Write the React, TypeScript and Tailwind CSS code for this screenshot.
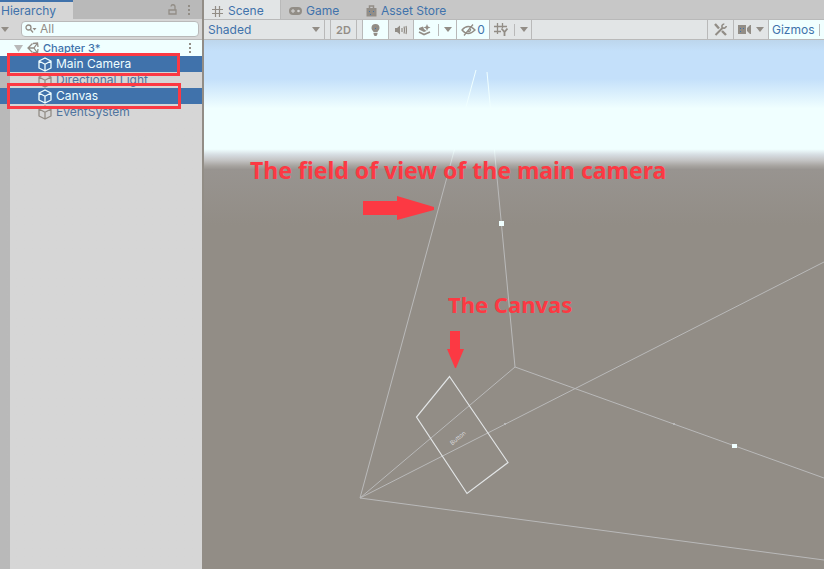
import type { ReactNode } from "react";

const caret = "M0 0h8L4 5z";

function Caret({ className = "" }: { className?: string }) {
  return (
    <svg className={"h-[5px] w-2 shrink-0 fill-[#928d86] " + className} viewBox="0 0 8 5" aria-hidden="true">
      <path d={caret} />
    </svg>
  );
}

function Dots() {
  return (
    <svg className="h-3 w-1 shrink-0 fill-[#928d86]" viewBox="0 0 4 12" aria-hidden="true">
      <path d="M1 1h2v2H1zM1 5h2v2H1zM1 9h2v2H1z" />
    </svg>
  );
}

function Cube() {
  return (
    <svg className="h-[15px] w-[14px] shrink-0" viewBox="0 0 14 15" fill="none" stroke="currentColor" strokeWidth="1.3" strokeLinejoin="round" aria-hidden="true">
      <path d="M7 1l6 3v7l-6 3-6-3V4zM1 4l6 3.3L13 4M7 7.300V14" />
    </svg>
  );
}

function TreeRow({ label, selected, mark }: { label: string; selected?: boolean; mark?: string }) {
  return (
    <li className="relative h-4">
      <button
        type="button"
        className={
          "flex h-4 w-full items-center gap-1 pl-[38px] text-left text-[12px] leading-4 " +
          (selected ? "bg-[#4072ab] text-[#f0ffff]" : "text-[#928d86]")
        }
      >
        <Cube />
        <span className={selected ? "" : "text-[#4f749e]"}>{label}</span>
      </button>
      {mark && <span className={"pointer-events-none absolute z-10 border-[3px] border-[#fc3943] " + mark} />}
    </li>
  );
}

function Hierarchy() {
  return (
    <aside className="flex w-[204px] shrink-0 flex-col border-r-2 border-[#928d86] bg-[#d6d6d6]">
      <header className="flex h-[19px] items-center bg-[#b9b9b9]">
        <h2 className="flex h-full w-[73px] items-center border-t-2 border-[#4072ab] bg-[#d6d6d6] pl-px text-[12px] text-[#4072ab]">
          Hierarchy
        </h2>
        <div className="ml-auto flex items-center gap-[10px] pr-[11px]">
          <button type="button" aria-label="Lock">
            <svg className="block h-3 w-[9px]" viewBox="0 0 9 12" fill="none" stroke="#928d86" strokeWidth="1.3" aria-hidden="true">
              <path d="M1 6h7v4H1zM7 6V3a2 2 0 0 0-4-.5" />
            </svg>
          </button>
          <button type="button" aria-label="Menu"><Dots /></button>
        </div>
      </header>
      <div className="flex h-[21px] items-center gap-3 border-b border-[#b9b9b9] pl-px pr-[3px]">
        <button type="button" aria-label="Create"><Caret /></button>
        <label className="flex h-4 min-w-0 flex-1 items-center gap-[3px] rounded border border-[#b9b9b9] bg-[#f0ffff] pl-[3px]">
          <svg className="h-[10px] w-3 shrink-0" viewBox="0 0 12 10" fill="none" stroke="#928d86" strokeWidth="1.3" aria-hidden="true">
            <circle cx="3.500" cy="3.500" r="2.500" />
            <path d="M5.500 5.500L8 8.500" />
            <path d="M7.500 4h4l-2 2.500z" fill="#928d86" stroke="none" />
          </svg>
          <input aria-label="Search" placeholder="All" className="w-full min-w-0 bg-transparent text-[12px] leading-4 outline-none placeholder:text-[#928d86]" />
        </label>
      </div>
      <div className="flex flex-1 flex-col">
        <div className="flex h-4 items-center bg-[#f0ffff] pl-[14px] pr-[10px] leading-4 text-[#4072ab]">
          <svg className="h-[7px] w-[9px] fill-[#b9b9b9]" viewBox="0 0 9 7" aria-hidden="true"><path d="M0 0h9L4.500 7z" /></svg>
          <svg className="ml-1 h-3 w-3" viewBox="0 0 12 12" fill="none" stroke="#928d86" strokeWidth="1.300" aria-hidden="true">
            <path d="M5.500 1.500L1 6l4.500 4.500M1 6h6M10.500 1L7 6l3.500 5M6 1.500l4.500-.5.500 4M6 10.500l4.500.5.500-4" />
          </svg>
          <span className="ml-1 text-[11px] font-medium">Chapter 3*</span>
          <button type="button" aria-label="Scene menu" className="ml-auto"><Dots /></button>
        </div>
        <ul className="flex-1 bg-linear-to-r from-[#b9b9b9] from-[10px] to-[#d6d6d6] to-[10px]">
          <TreeRow label="Main Camera" selected mark="-top-[3px] left-[7px] h-[23px] w-[173px]" />
          <TreeRow label="Directional Light" />
          <TreeRow label="Canvas" selected mark="-top-[5px] left-[7px] h-[26px] w-[174px]" />
          <TreeRow label="EventSystem" />
        </ul>
      </div>
    </aside>
  );
}

function Tool({ label, className, children }: { label: string; className: string; children: ReactNode }) {
  return (
    <button type="button" aria-label={label} className={"flex h-full shrink-0 items-center justify-center border-r border-[#b9b9b9] " + className}>
      {children}
    </button>
  );
}

function Tabs() {
  return (
    <nav className="flex h-[19px] shrink-0 bg-[#c7c7c7] text-[12px] leading-4 text-[#4072ab]">
      <button type="button" className="flex w-[77px] items-center gap-[5px] border-r border-[#b9b9b9] bg-[#e2e5e6] pl-2 pt-[3px]">
        <svg className="h-[11px] w-[11px]" viewBox="0 0 11 11" stroke="#928d86" strokeWidth="1.200" aria-hidden="true">
          <path d="M3.500 0v11M7.500 0v11M0 3.500h11M0 7.500h11" />
        </svg>
        Scene
      </button>
      <button type="button" className="flex w-[77px] items-center gap-1 pl-2 pt-[3px]">
        <svg className="h-2 w-[13px]" viewBox="0 0 13 8" aria-hidden="true">
          <rect width="13" height="8" rx="4" fill="#928d86" />
          <path d="M2 4h4M4 2v4" stroke="#d6d6d6" />
          <circle cx="9.500" cy="4" r="1.300" fill="#d6d6d6" />
        </svg>
        Game
      </button>
      <button type="button" className="flex items-center gap-1 pl-2 pt-[3px]">
        <svg className="h-3 w-[11px]" viewBox="0 0 11 12" aria-hidden="true">
          <path d="M3.500 4V1h4v3" fill="none" stroke="#928d86" strokeWidth="1.500" />
          <path d="M.5 3h10v8.500H.5z" fill="#928d86" />
          <path d="M3 6h1v1H3zM7 6h1v1H7zM4 9h1v1H4z" fill="#4072ab" />
        </svg>
        Asset Store
      </button>
    </nav>
  );
}

function Toolbar() {
  return (
    <div className="flex h-[21px] shrink-0 border-y border-[#b9b9b9] bg-[#e2e5e6] text-[12px] leading-4 text-[#4072ab]">
      <div className="relative mr-[5px] flex w-[121px] shrink-0 items-center border-r border-[#b9b9b9]">
        <select aria-label="Draw mode" className="w-full appearance-none bg-transparent pl-1 outline-none">
          <option>Shaded</option>
        </select>
        <Caret className="pointer-events-none absolute right-1" />
      </div>
      <Tool label="2D" className="mr-[5px] w-[27px] border-l text-[11px] font-semibold text-[#928d86]">2D</Tool>
      <Tool label="Lighting" className="w-[27px] border-l bg-[#f0ffff]">
        <svg className="h-3 w-[9px] fill-[#928d86]" viewBox="0 0 9 12" aria-hidden="true">
          <path d="M4.500 0a4 4 0 0 1 4 4c0 2-1.500 2.500-2 4H2.500C2 6.500.5 6 .5 4a4 4 0 0 1 4-4zM2.500 8.700h4V10L5.500 12h-2l-1-2z" />
          <path d="M4 4h1v1H4z" fill="#4072ab" />
        </svg>
      </Tool>
      <Tool label="Audio" className="w-[25px]">
        <svg className="h-[10px] w-3" viewBox="0 0 12 10" fill="none" stroke="#928d86" strokeWidth="1.200" aria-hidden="true">
          <path d="M0 3h2l3-2.500v9L2 7H0z" fill="#928d86" stroke="none" />
          <path d="M7 3v4M9 1.500q1 3.500 0 7M11 1q1 4 0 8" />
        </svg>
      </Tool>
      <Tool label="Effects" className="w-[43px] bg-[#f0ffff]">
        <svg className="h-3 w-[13px]" viewBox="0 0 13 12" aria-hidden="true">
          <path d="M9 0l1 2.500 2.500 1-2.500 1L9 7 8 4.500 5.500 3.500 8 2.500zM1 4l4-1.500L6 5l2.500 2L6 8 1 5.500z" fill="#928d86" />
          <path d="M1 8l5 2.500L12 8" fill="none" stroke="#928d86" strokeWidth="1.600" />
        </svg>
        <span className="ml-[7px] mr-[5px] h-3 border-l border-[#b9b9b9]" />
        <Caret />
      </Tool>
      <Tool label="Hidden objects: 0" className="w-[33px] gap-px bg-[#f0ffff]">
        <svg className="h-3 w-[15px]" viewBox="0 0 15 12" fill="none" stroke="#928d86" strokeWidth="1.300" aria-hidden="true">
          <path d="M1 6q6-7 13 0-7 7-13 0zM3 11.500L12 .5M7 7.500A2 2 0 0 0 9.500 5" />
        </svg>
        <span>0</span>
      </Tool>
      <Tool label="Grid" className="w-[42px]">
        <svg className="h-[13px] w-[14px]" viewBox="0 0 14 13" fill="none" stroke="#928d86" strokeWidth="1.300" aria-hidden="true">
          <path d="M3.500 0v11M8.500 0v5M0 3.500h13M0 8.500h7" />
          <path d="M7.500 5.500L10.500 9l3-3.500M10.500 9v4" strokeWidth="1.800" />
        </svg>
        <span className="ml-1.5 mr-[5px] h-3 border-l border-[#b9b9b9]" />
        <Caret />
      </Tool>
      <div className="ml-auto flex h-full">
        <Tool label="Component tools" className="w-[27px] border-l">
          <svg className="h-[13px] w-[13px]" viewBox="0 0 13 13" fill="none" stroke="#928d86" aria-hidden="true">
            <path d="M1 1l4 4.500M8 8l4 4" strokeWidth="2.400" />
            <path d="M1.500 12L9 4.500" strokeWidth="2" />
            <path d="M10.300 1a2.300 2.300 0 0 0-2 3.500 2.400 2.400 0 0 0 4-1.500" strokeWidth="1.600" />
          </svg>
        </Tool>
        <Tool label="Camera settings" className="w-[35px] gap-[5px]">
          <svg className="h-[9px] w-[13px] fill-[#928d86]" viewBox="0 0 13 9" aria-hidden="true">
            <path d="M0 0h8v9H0zM9 3l3-3h1v9h-1L9 6z" />
            <path d="M2 3h1v1H2zM5 3h1v1H5zM2 6h1v1H2z" fill="#4072ab" />
          </svg>
          <Caret />
        </Tool>
        <button type="button" className="flex w-[55px] items-center justify-between bg-[#f0ffff] pl-[3px] pr-1">
          Gizmos
          <span className="h-3 border-l border-[#b9b9b9]" />
        </button>
      </div>
    </div>
  );
}

function SceneView() {
  return (
    <section aria-label="Scene view" className="relative flex-1 overflow-hidden bg-[#928d86]">
      <svg className="absolute left-0 top-0 h-full w-full" viewBox="204 40 620 529" preserveAspectRatio="xMinYMin slice" aria-hidden="true">
        <defs>
          <linearGradient id="sky" x1="0" y1="40" x2="0" y2="225" gradientUnits="userSpaceOnUse">
            <stop offset="0" stopColor="#bdd6ec" />
            <stop offset="0.060" stopColor="#c4e0fa" />
            <stop offset="0.210" stopColor="#c4e0fa" />
            <stop offset="0.370" stopColor="#f0ffff" />
            <stop offset="0.590" stopColor="#f0ffff" />
            <stop offset="0.620" stopColor="#d6dde2" />
            <stop offset="0.650" stopColor="#c4c4c4" />
            <stop offset="0.680" stopColor="#a7a4a0" />
            <stop offset="0.700" stopColor="#989490" />
            <stop offset="1" stopColor="#928d86" />
          </linearGradient>
          <linearGradient id="ray" x1="0" y1="70" x2="0" y2="170" gradientUnits="userSpaceOnUse">
            <stop offset="0" stopColor="#f0ffff" />
            <stop offset="0.800" stopColor="#f0ffff" />
            <stop offset="1" stopColor="#b9b9b9" />
          </linearGradient>
        </defs>
        <path d="M204 40h620v190H204z" fill="url(#sky)" />
        <g fill="none" stroke="#b9b9b9">
          <path d="M476 70L360 498M515 367L487 72" stroke="url(#ray)" />
          <path d="M360 498L515 367L824 478M360 498L824 262M360 498L824 560" />
        </g>
        <path d="M449.500 376.500L508 462.500L467 493.500L416.500 417z" fill="none" stroke="#e2e5e6" strokeWidth="1.200" />
        <path d="M499 221h5v5h-5zM732 444h5v4h-5z" fill="#f0ffff" />
        <path d="M504 423h2v2h-2zM673 423h2v2h-2z" fill="#b9b9b9" />
        <path d="M363 201h34v-5l37 11v3l-37 10v-5h-34zM450 331h10v18h4l-8 19h-1l-8-19h3z" fill="#fc3943" />
        <text x="458" y="440" fill="#d6d6d6" fontSize="6" textAnchor="middle" fontFamily="Inter, sans-serif" transform="rotate(-40 458 438)">
          Button
        </text>
      </svg>
      <p className="absolute left-[46px] top-[114px] whitespace-nowrap font-['Noto_Sans',sans-serif] text-[23px] font-bold leading-8 text-[#fc3943]">
        The field of view of the main camera
      </p>
      <p className="absolute left-[244px] top-[248px] whitespace-nowrap font-['Noto_Sans',sans-serif] text-[22px] font-bold leading-8 text-[#fc3943]">
        The Canvas
      </p>
    </section>
  );
}

export default function App() {
  return (
    <div className="flex h-screen w-full overflow-hidden bg-[#d6d6d6] font-['Inter',sans-serif]">
      <Hierarchy />
      <main className="flex min-w-0 flex-1 flex-col">
        <Tabs />
        <Toolbar />
        <SceneView />
      </main>
    </div>
  );
}
